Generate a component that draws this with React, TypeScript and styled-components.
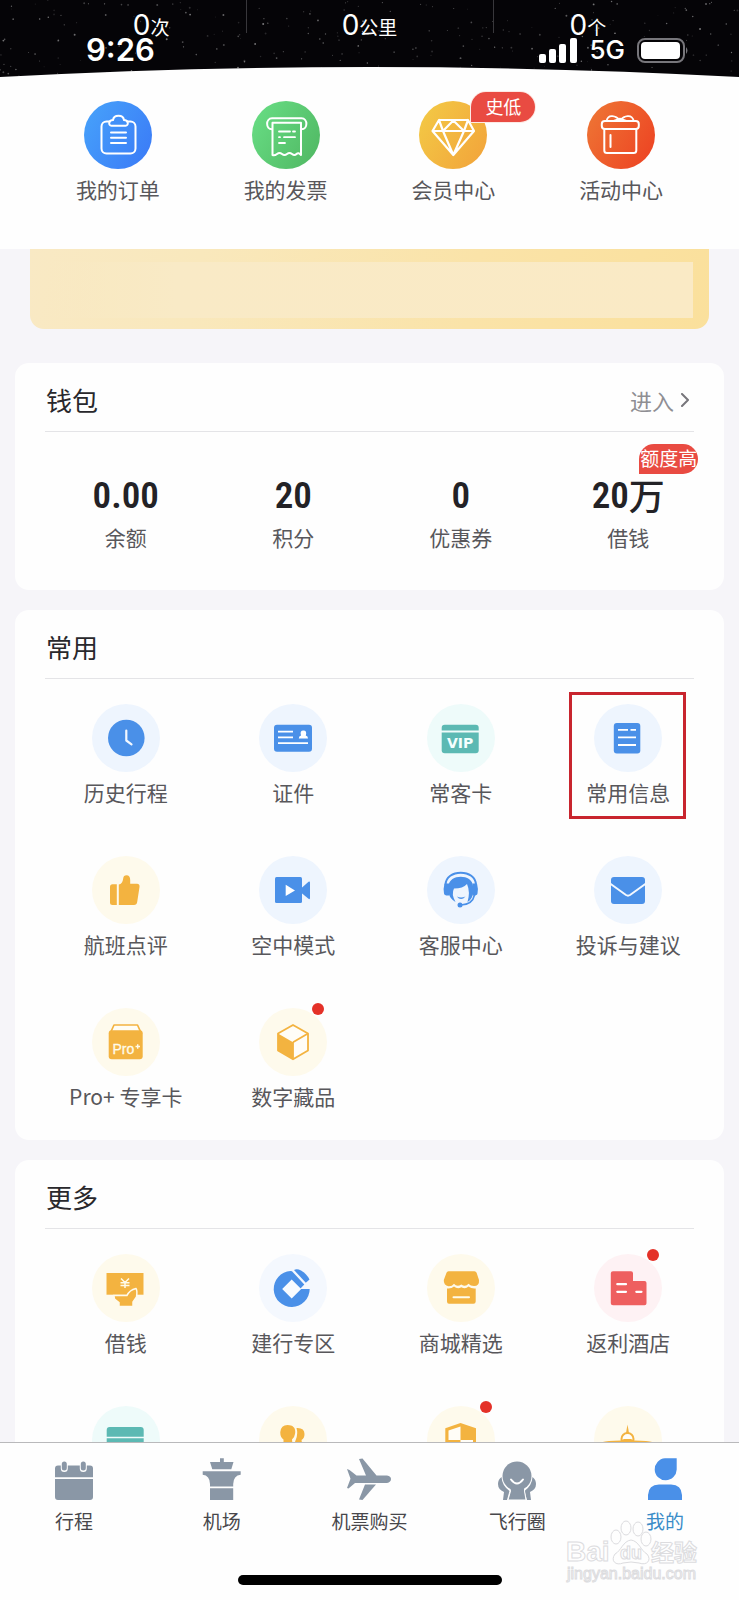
import React from "react";
import styled, { createGlobalStyle, css } from "styled-components";

const GlobalStyle = createGlobalStyle`
  *, *::before, *::after { box-sizing: border-box; }
  body {
    margin: 0;
    background: #f6f5f9;
    color: #58575b;
    font-family: "Noto Sans CJK SC", sans-serif;
  }
  h1, h2, p { margin: 0; }
  a { color: inherit; text-decoration: none; }
  button { border: 0; padding: 0; background: none; font: inherit; color: inherit; cursor: pointer; }
  svg { display: block; }
`;

const BLUE = "#4a90e8";
const TEAL = "#5cb9b3";
const YELLOW = "#f3b340";
const RED = "#ee5f5f";
const GREY = "#8a97a6";

const Screen = styled.div`
  display: flex;
  flex-direction: column;
  height: 100vh;
  overflow: hidden;
`;

/* ---------- top ---------- */

const Sky = styled.header`
  position: relative;
  height: 77px;
  background: #050407;
  color: #fff;
  overflow: hidden;
`;

const SkyLayer = styled.svg`
  position: absolute;
  inset: 0;
  width: 100%;
  height: 100%;
`;

const Horizon = styled.svg`
  position: absolute;
  left: 0;
  bottom: 0;
  width: 100%;
  height: 11px;
`;

const TripStats = styled.div`
  position: relative;
  display: grid;
  grid-template-columns: repeat(3, 1fr);
  padding: 10px 42px 0;
`;

const TripStat = styled.p`
  text-align: center;
  font: 400 19px/30px "Noto Sans CJK SC", sans-serif;
  white-space: nowrap;

  b {
    font: 400 28px/30px Inter, sans-serif;
  }
`;

const Divider = styled.i<{ $at: string }>`
  position: absolute;
  top: 0;
  left: ${(p) => p.$at};
  width: 1px;
  height: 33px;
  background: #38373b;
`;

const StatusBar = styled.div`
  position: absolute;
  top: 34px;
  left: 86px;
  right: 50px;
  display: flex;
  align-items: center;
  justify-content: space-between;
  font: 600 31px/32px Inter, sans-serif;
`;

const StatusRight = styled.div`
  display: flex;
  align-items: center;
  gap: 12px;
  font-size: 26px;
  font-weight: 500;
`;

const QuickRow = styled.nav`
  display: grid;
  grid-template-columns: repeat(4, 1fr);
  padding: 24px 34px 45px;
  background: #fefefe;
`;

/* ---------- shared tile ---------- */

const Tile = styled.a`
  position: relative;
  display: flex;
  flex-direction: column;
  align-items: center;
  gap: 5px;
`;

const TileLabel = styled.span`
  font-size: 21px;
  line-height: 30px;
  white-space: nowrap;
`;

const Disc = styled.svg`
  width: 68px;
  height: 68px;
`;

const Dot = styled.i`
  position: absolute;
  top: -5px;
  left: calc(50% + 19px);
  width: 12px;
  height: 12px;
  border-radius: 50%;
  background: #e43128;
`;

const Highlight = styled.i`
  position: absolute;
  inset: -12px auto -12px calc(50% - 59px);
  width: 117px;
  border: 3px solid #c8252e;
`;

const Tag = styled.em<{ $wide?: boolean }>`
  position: absolute;
  top: ${(p) => (p.$wide ? "-30px" : "-9px")};
  left: calc(50% + ${(p) => (p.$wide ? 11 : 18)}px);
  width: ${(p) => (p.$wide ? 59 : 64)}px;
  padding-bottom: 2px;
  border-radius: 16px 16px 16px 0;
  background: #e94b42;
  color: #fff;
  font-style: normal;
  font-size: ${(p) => (p.$wide ? 19 : 18)}px;
  line-height: 28px;
  text-align: center;
  white-space: nowrap;
  ${(p) => !p.$wide && css`box-shadow: 0 0 0 1px #fde9e4;`}
`;

/* ---------- body ---------- */

const Feed = styled.main`
  flex: 1;
  min-height: 0;
  overflow-y: auto;
  scrollbar-width: none;
  padding: 0 15px;
  display: flex;
  flex-direction: column;
  gap: 20px;
`;

const Banner = styled.div`
  flex: none;
  margin: 0 15px 14px;
  padding: 13px 16px 11px;
  border-radius: 0 0 14px 14px;
  background: linear-gradient(100deg, #f9e9c4 0%, #f9e8bc 25%, #fae3a8 65%, #fae09c 100%);
`;

const BannerInner = styled.div`
  height: 56px;
  background: linear-gradient(90deg, rgba(249, 234, 200, 0), #f9eac6 20%, #faeac5);
`;

const Card = styled.section`
  flex: none;
  border-radius: 14px;
  background: #fefefe;
`;

const CardHead = styled.div`
  display: flex;
  align-items: center;
  justify-content: space-between;
  height: 69px;
  margin: 0 30px;
  padding: 6px 4px 0 1px;
  border-bottom: 1px solid #e4e4e7;
`;

const CardTitle = styled.h2`
  font-size: 26px;
  line-height: 36px;
  font-weight: 400;
  color: #29282c;
`;

const EnterLink = styled.a`
  display: flex;
  align-items: center;
  gap: 6px;
  color: #8f8e93;
  font-size: 22px;
  line-height: 32px;
`;

const CardGrid = styled.div<{ $wallet?: boolean }>`
  display: grid;
  grid-template-columns: repeat(4, 1fr);
  row-gap: 49px;
  padding: ${(p) => (p.$wallet ? "42px 12px 38px 27px" : "25px 12px 29px 27px")};
`;

const Amount = styled.strong`
  display: flex;
  align-items: center;
  height: 43px;
  font: 600 37px/42px "Roboto Condensed", Roboto, sans-serif;
  color: #232226;
  white-space: nowrap;

  small {
    padding-bottom: 4px;
    font: 500 36px/38px "Noto Sans CJK SC", sans-serif;
  }
`;

/* ---------- bottom ---------- */

const TabBar = styled.footer`
  position: relative;
  height: 158px;
  padding-top: 14px;
  border-top: 1px solid #b9b9bb;
  background: #fefefe;
`;

const Tabs = styled.nav`
  display: grid;
  grid-template-columns: repeat(5, 1fr);
`;

const Tab = styled.button<{ $active?: boolean }>`
  display: flex;
  flex-direction: column;
  align-items: center;
  gap: 6px;
  font-size: 19px;
  line-height: 28px;
  color: ${(p) => (p.$active ? "#3a8cc8" : "#48474b")};
`;

const HomeIndicator = styled.i`
  position: absolute;
  bottom: 15px;
  left: 50%;
  width: 264px;
  height: 10px;
  margin-left: -132px;
  border-radius: 5px;
  background: #000;
`;

const Watermark = styled.svg`
  position: absolute;
  right: 36px;
  bottom: 8px;
  width: 140px;
  height: 72px;
`;

/* ---------- drawings ---------- */

const line = { fill: "none", strokeLinecap: "round", strokeLinejoin: "round" } as const;

function Stars() {
  let seed = 41;
  const next = () => {
    seed = (seed * 1103515245 + 12345) % 2147483648;
    return seed / 2147483648;
  };
  const stars = Array.from({ length: 260 }, () => ({
    x: next() * 739,
    y: next() * 77,
    r: 0.4 + next() * 0.6,
    o: 0.12 + next() * 0.35,
  }));
  return (
    <SkyLayer viewBox="0 0 739 77" preserveAspectRatio="xMidYMid slice" aria-hidden>
      {stars.map((s, i) => (
        <circle key={i} cx={s.x} cy={s.y} r={s.r} fill="#fff" opacity={s.o} />
      ))}
    </SkyLayer>
  );
}

const Signal = () => (
  <svg width="38" height="25" viewBox="0 0 38 25" fill="#fff" aria-hidden>
    <rect x="0" y="16" width="7" height="9" rx="2" />
    <rect x="10" y="11" width="7" height="14" rx="2" />
    <rect x="20" y="6" width="7" height="19" rx="2" />
    <rect x="31" y="0" width="7" height="25" rx="2" />
  </svg>
);

const Battery = () => (
  <svg width="52" height="25" viewBox="0 0 52 25" aria-hidden>
    <rect x="1" y="1" width="46" height="23" rx="7" fill="none" stroke="#77767b" strokeWidth="2" />
    <rect x="4" y="4" width="39" height="17" rx="4" fill="#fff" />
    <path d="M49 9q3 3.500 0 7z" fill="#77767b" />
  </svg>
);

const Gradient = ({ id, from, to }: { id: string; from: string; to: string }) => (
  <>
    <defs>
      <linearGradient id={id} x1="0" y1="0.200" x2="1" y2="0.800">
        <stop offset="0" stopColor={from} />
        <stop offset="1" stopColor={to} />
      </linearGradient>
    </defs>
    <circle cx="34" cy="34" r="34" fill={`url(#${id})`} />
  </>
);

const quickIcons: Record<string, React.ReactNode> = {
  order: (
    <>
      <Gradient id="g-order" from="#46a0fa" to="#3b7cf7" />
      <g {...line} stroke="#fff" strokeWidth="2">
        <rect x="17.500" y="20.500" width="34" height="32" rx="5" />
        <path d="M27.500 24.800C24 24.500 24.500 19 29 19C29.500 16 32 14.800 34.500 14.800S39.500 16 40 19C44.500 19 45 24.500 41.500 24.800Z" fill="#4290f8" />
        <path d="M27 31.500H42M27 36.800H42M27 42H42" />
      </g>
    </>
  ),
  invoice: (
    <>
      <Gradient id="g-invoice" from="#67dc83" to="#51b964" />
      <g {...line} stroke="#fff" strokeWidth="2">
        <path d="M20 28.300C13.500 28.300 13.500 17.300 20 17.300H49.500C56 17.300 56 28.300 49.500 28.300" />
        <path d="M20.500 54V21.800H49V54Q46.500 51 44.500 53T40 53T35 53T30 53T25 53T20.500 54Z" />
        <path d="M27 30.500H38M41 30.500H43M27 36.200H28M32 36.200H43M27 42H33" strokeWidth="1.800" />
      </g>
    </>
  ),
  vip: (
    <>
      <Gradient id="g-vip" from="#f3c845" to="#f2a53b" />
      <path
        {...line}
        stroke="#fff"
        strokeWidth="2.200"
        d="M20 19H49L55 30L34.300 54L13.500 30ZM13.500 30H55M20 19L24 30L34.300 19.500L45 30L49 19M24 30L34.300 54L45 30"
      />
    </>
  ),
  gift: (
    <>
      <Gradient id="g-gift" from="#ee7434" to="#ed4423" />
      <g {...line} stroke="#fff" strokeWidth="2">
        <rect x="14.800" y="20" width="37" height="8" rx="3" />
        <path d="M17.300 28V49.500Q17.300 52 20 52H46.500Q49.300 52 49.300 49.500V28M23.500 34V46" />
        <path d="M19.500 20C21 12.500 29 14.500 33 19.500C37 14.500 45 12.500 46.800 20M26 20L33 17.500L40 20" strokeWidth="1.700" />
      </g>
    </>
  ),
};

const pale = { blue: "#eef5fe", ice: "#f4f8fe", teal: "#eefbfa", yellow: "#fefaec", red: "#fef2f4" };

const icons: Record<string, [keyof typeof pale, React.ReactNode]> = {
  clock: ["blue", (
    <>
      <circle cx="34.300" cy="34" r="18.300" fill={BLUE} />
      <path {...line} stroke="#f3f8ff" strokeWidth="2.200" d="M34.300 26.500V36.500L39.500 40.300" />
    </>
  )],
  id: ["blue", (
    <>
      <rect x="15" y="20.700" width="38" height="27" rx="3" fill={BLUE} />
      <path stroke="#fff" strokeWidth="1.800" d="M19 27.700H34M19 33.300H34M19 39.200H49" />
      <path d="M39.800 34.500Q39.800 32 42 31.500Q40.500 26.500 44.400 26.500T46.800 31.500Q49 32 49 34.500Z" fill="#fff" />
    </>
  )],
  vipcard: ["teal", (
    <>
      <rect x="14.700" y="20.700" width="37" height="28.600" rx="3" fill={TEAL} />
      <path stroke="#effbfa" strokeWidth="2" d="M14 27.500H52" />
      <text x="33.200" y="43.500" textAnchor="middle" fill="#f4fffe" fontFamily="DejaVu Sans" fontWeight="700" fontSize="14">VIP</text>
    </>
  )],
  doc: ["blue", (
    <>
      <rect x="19.800" y="19" width="26.500" height="30.500" rx="3" fill={BLUE} />
      <path stroke="#fff" strokeWidth="1.800" d="M24 25.800H34M36.500 25.800H42M24 33.400H42M24 41H42" />
    </>
  )],
  thumb: ["yellow", (
    <g fill={YELLOW}>
      <path d="M24.800 28.300V49H20.500Q18 49 18 46.500V31Q18 28.300 20.500 28.300Z" />
      <path d="M26.800 49V28.500Q30.500 28 31.200 22.500Q31.500 19.300 34.500 19.300Q38.200 19.500 38.200 24V27.800H45Q48 28 47.500 31L45.200 46Q44.800 49 42 49Z" />
    </g>
  )],
  video: ["blue", (
    <>
      <rect x="16" y="21" width="27" height="26" rx="1.500" fill={BLUE} />
      <path d="M42.500 32L49.500 25.700Q51 25 51 26.500V42Q51 43.800 49.500 42.800L42.500 37Z" fill={BLUE} />
      <path d="M26.700 28.800V40L36 34.400Z" fill="#fff" />
    </>
  )],
  headset: ["blue", (
    <>
      <path {...line} stroke={BLUE} strokeWidth="2" d="M18.500 29C18.500 12.500 49 12.500 49 29" />
      <path d="M17.500 27.500H22V39.500Q17.500 40 17 37.500Q16 33 17.500 27.500ZM50 27.500H45.500V39.500Q50 40 50.500 37.500Q51.500 33 50 27.500Z" fill={BLUE} />
      <path d="M21.500 30C22 17.500 45.500 17.500 46 30V38Q44.500 44 40.500 46Q43.500 36 40 28Q36 32.500 27 32.500Q24 38 28.500 46Q23 43 21.500 37Z" fill={BLUE} />
      <path {...line} stroke={BLUE} strokeWidth="1.600" d="M47.500 39Q45.500 48.500 34 49" />
      <path d="M29.800 40.500Q34 42.500 38.500 40.500Q34 45.500 29.800 40.500Z" fill={BLUE} />
      <circle cx="33" cy="49" r="2.500" fill={BLUE} />
    </>
  )],
  mail: ["blue", (
    <>
      <rect x="17" y="21" width="34" height="27" rx="3" fill={BLUE} />
      <path fill="none" stroke="#f3f8ff" strokeWidth="2" d="M16 27.500L32 39Q34 40.300 36 39L52 27.500" />
    </>
  )],
  pro: ["yellow", (
    <>
      <path d="M18.800 24L22 17H45.500L48.700 24Z" fill="#fffdf5" stroke={YELLOW} strokeWidth="1.700" strokeLinejoin="round" />
      <rect x="16.700" y="22.300" width="34" height="29" rx="3" fill={YELLOW} />
      <text x="20.500" y="46" fill="#fffbe9" stroke="#fffbe9" strokeWidth="0.300" fontFamily="Liberation Sans" fontSize="14">Pro</text>
      <path stroke="#fffbe9" strokeWidth="1.400" d="M43.500 38.500H48M45.700 36.200V40.800" />
    </>
  )],
  cube: ["yellow", (
    <>
      <path d="M34 17L49 25.500V42.500L34 51.300L19 42.500V25.500Z" fill="#fffdf7" stroke={YELLOW} strokeWidth="1.800" strokeLinejoin="round" />
      <path d="M19 25.500L34 34.300V51.300L19 42.500Z" fill={YELLOW} />
      <path d="M34 34.300L49 25.500M34 34.300V51" stroke={YELLOW} strokeWidth="1.800" />
    </>
  )],
  money: ["yellow", (
    <>
      <rect x="14.500" y="19" width="37" height="21.700" fill={YELLOW} />
      <path d="M29 24.500L33 28.500L37 24.500M28.500 28.800H37.500M28.500 31.500H37.500M33 28.500V34" fill="none" stroke="#fffbe9" strokeWidth="1.500" />
      <path d="M21.800 41.500H35Q37.500 36 44 34.500Q45.500 36.500 44.500 43L41 48V52.500H27V48.500L22.500 45Z" fill={YELLOW} stroke="#fefaec" strokeWidth="1.500" />
    </>
  )],
  bank: ["ice", (
    <>
      <path d="M31.500 17A18 18 0 1 0 50.700 35H41L45.300 30.500L33 17.300Z" fill={BLUE} />
      <path d="M35 16Q38 14.500 42 16.500Q47.500 19.500 50.500 25.500L46.800 28.800Z" fill={BLUE} />
      <path d="M32.700 25.500L42.200 35L32.700 44.500L23.200 35Z" fill="#f8fbff" />
    </>
  )],
  shop: ["yellow", (
    <>
      <path d="M21.500 17.300H47.500Q49 17.300 49.600 18.800L52 26Q52.500 32 47 32Q43.500 32 41.500 29.800Q38.500 33.500 34.300 30.500Q30 33.500 27 29.800Q25 32.500 21.500 32.300Q16.500 31.500 16.800 26L19.500 18.800Q20 17.300 21.500 17.300Z" fill={YELLOW} />
      <path d="M20 34.500Q24.500 35 27 32.500Q30.500 35.500 34.300 33.200Q38.500 35.500 41.500 32.500Q44.500 35 48.700 34.500V47.500Q48.700 49.700 46.500 49.700H22Q20 49.700 20 47.500Z" fill={YELLOW} />
      <path {...line} stroke="#fffbe9" strokeWidth="2" d="M26.500 43.300H42" />
    </>
  )],
  hotel: ["red", (
    <>
      <path d="M19 17.300H37Q39 17.300 39 19.300V27H50.500Q52.500 27 52.500 29V49.300Q52.500 51.300 50.500 51.300H19Q16.800 51.300 16.800 49.300V19.300Q16.800 17.300 19 17.300Z" fill={RED} />
      <path {...line} stroke="#fff" strokeWidth="2.200" d="M23.300 30.200H32M23.300 37.800H32M42.300 37.800H47.500" />
    </>
  )],
  card: ["teal", (
    <>
      <rect x="14.700" y="21" width="37" height="28" rx="3" fill={TEAL} />
      <path stroke="#effbfa" strokeWidth="1.500" d="M14 31.500H52" />
    </>
  )],
  people: ["yellow", (
    <>
      <path d="M28.500 19C35 19 37 23 36 28Q35.500 31.500 33 33.500L33.500 38L40 41V46H16V41L24.500 38V33.500Q21 31 21.300 26Q22 19 28.500 19Z" fill={YELLOW} />
      <path d="M37.500 22Q45.500 21.500 45.500 28Q45.500 32.500 42.500 34L43 37L49 40V46H42V39L36 36Q39.500 29 37.500 22Z" fill={YELLOW} />
    </>
  )],
  shield: ["yellow", (
    <>
      <path d="M33.500 17L49 22.300V42L33.500 51L18.300 42V22.300Z" fill={YELLOW} />
      <path d="M33.500 20.500V34H21.500V24.500ZM33.500 34H46V41L33.500 48Z" fill="#fffdf7" />
    </>
  )],
  jet: ["yellow", (
    <>
      <path d="M33.500 18.500L35 27H32Z" fill={YELLOW} />
      <circle cx="33.500" cy="33" r="6" fill="#fffdf7" stroke={YELLOW} strokeWidth="2" />
      <path d="M30 33H37L40 34.500Q58 35 59 36.500V38H8V36.500Q9 35 27 34.500Z" fill={YELLOW} />
    </>
  )],
};

const tabIcons: Record<string, React.ReactNode> = {
  calendar: (
    <>
      <path d="M8 8.500H40Q43 8.500 43 11.500V20.300H5V11.500Q5 8.500 8 8.500ZM5 22H43V40Q43 43 40 43H8Q5 43 5 40Z" />
      <path d="M14.300 6V11.500M33.300 6V11.500" stroke="#fefefe" strokeWidth="7" strokeLinecap="round" />
      <path d="M14.300 7V11M33.300 7V11" stroke={GREY} strokeWidth="5" strokeLinecap="round" />
    </>
  ),
  tower: (
    <path d="M22 1.300H25.800V5H35.500L33.300 12.300H14.300L12 5H22ZM4.700 14.300H42.700V17.800Q35.500 18.500 35.200 27V29.500H12V27Q11.800 18.500 4.700 17.800ZM12 31.200H35.200V43H12Z" />
  ),
  plane: (
    <>
      <path d="M2 12L4.500 13L11.500 18.500H21L14 2L17.500 1.500L31.500 18.500H42Q46 19 46 22T42 26H10L3.500 31.500L2 31L5.500 21.800Z" />
      <path d="M20 27.500H31L17.500 43L14 42.500Z" />
    </>
  ),
  circle: (
    <>
      <path d="M8.500 20Q9 28.500 16.500 34L14 43H10L11 35Q5 32.500 5 27Q5 22.500 8.500 20ZM39.500 20Q39 28.500 31.500 34L34 43H38L37 35Q43 32.500 43 27Q43 22.500 39.500 20Z" />
      <path d="M16.500 30H31.500V34L33 43H15L17.500 34Z" stroke="#fefefe" strokeWidth="1" />
      <circle cx="24" cy="19" r="14.500" />
      <path d="M18 22.500Q24 30.500 30 22.500" fill="none" stroke="#fff" strokeWidth="2" strokeLinecap="round" />
    </>
  ),
  me: (
    <path d="M24 1.300H35.700V12.500A11 11 0 1 1 24 1.300ZM7 43V38Q7.500 27.700 18 27.500H30Q40.500 27.700 41 38V43Z" />
  ),
};

/* ---------- data ---------- */

type Item = { label: string; icon: string; dot?: boolean; boxed?: boolean };

const quick = [
  { label: "我的订单", icon: "order" },
  { label: "我的发票", icon: "invoice" },
  { label: "会员中心", icon: "vip", tag: "史低" },
  { label: "活动中心", icon: "gift" },
];

const wallet = [
  { value: "0.00", label: "余额" },
  { value: "20", label: "积分" },
  { value: "0", label: "优惠券" },
  { value: "20", unit: "万", label: "借钱", tag: "额度高" },
];

const common: Item[] = [
  { label: "历史行程", icon: "clock" },
  { label: "证件", icon: "id" },
  { label: "常客卡", icon: "vipcard" },
  { label: "常用信息", icon: "doc", boxed: true },
  { label: "航班点评", icon: "thumb" },
  { label: "空中模式", icon: "video" },
  { label: "客服中心", icon: "headset" },
  { label: "投诉与建议", icon: "mail" },
  { label: "Pro+ 专享卡", icon: "pro" },
  { label: "数字藏品", icon: "cube", dot: true },
];

const more: Item[] = [
  { label: "借钱", icon: "money" },
  { label: "建行专区", icon: "bank" },
  { label: "商城精选", icon: "shop" },
  { label: "返利酒店", icon: "hotel", dot: true },
  { label: "", icon: "card" },
  { label: "", icon: "people" },
  { label: "", icon: "shield", dot: true },
  { label: "", icon: "jet" },
];

const tabs = [
  { label: "行程", icon: "calendar" },
  { label: "机场", icon: "tower" },
  { label: "机票购买", icon: "plane" },
  { label: "飞行圈", icon: "circle" },
  { label: "我的", icon: "me", active: true },
];

function TileGrid({ items }: { items: Item[] }) {
  return (
    <CardGrid>
      {items.map((item) => {
        const [tone, art] = icons[item.icon];
        return (
          <Tile key={item.icon} href="#">
            <Disc viewBox="0 0 68 68" aria-hidden>
              <circle cx="34" cy="34" r="34" fill={pale[tone]} />
              {art}
            </Disc>
            <TileLabel>{item.label}</TileLabel>
            {item.dot && <Dot />}
            {item.boxed && <Highlight />}
          </Tile>
        );
      })}
    </CardGrid>
  );
}

export default function App() {
  return (
    <Screen>
      <GlobalStyle />
      <Sky>
        <Stars />
        <Divider $at="33.3%" />
        <Divider $at="66.7%" />
        <TripStats>
          <TripStat><b>0</b>次</TripStat>
          <TripStat><b>0</b>公里</TripStat>
          <TripStat><b>0</b>个</TripStat>
        </TripStats>
        <StatusBar>
          <span>9:26</span>
          <StatusRight>
            <Signal />
            <span>5G</span>
            <Battery />
          </StatusRight>
        </StatusBar>
        <Horizon viewBox="0 0 739 11" preserveAspectRatio="none" aria-hidden>
          <path d="M0 11Q370 -9 739 11Z" fill="#fefefe" />
        </Horizon>
      </Sky>

      <QuickRow>
        {quick.map((item) => (
          <Tile key={item.icon} href="#">
            <Disc viewBox="0 0 68 68" aria-hidden>{quickIcons[item.icon]}</Disc>
            <TileLabel>{item.label}</TileLabel>
            {item.tag && <Tag>{item.tag}</Tag>}
          </Tile>
        ))}
      </QuickRow>

      <Feed>
        <Banner>
          <BannerInner />
        </Banner>

        <Card>
          <CardHead>
            <CardTitle>钱包</CardTitle>
            <EnterLink href="#">
              进入
              <svg width="10" height="14" viewBox="0 0 10 14" aria-hidden>
                <path {...line} stroke="#77767b" strokeWidth="2" d="M2 1L8 7L2 13" />
              </svg>
            </EnterLink>
          </CardHead>
          <CardGrid $wallet>
            {wallet.map((item) => (
              <Tile key={item.label} href="#">
                <Amount>
                  {item.value}
                  {item.unit && <small>{item.unit}</small>}
                </Amount>
                <TileLabel>{item.label}</TileLabel>
                {item.tag && <Tag $wide>{item.tag}</Tag>}
              </Tile>
            ))}
          </CardGrid>
        </Card>

        <Card>
          <CardHead>
            <CardTitle>常用</CardTitle>
          </CardHead>
          <TileGrid items={common} />
        </Card>

        <Card>
          <CardHead>
            <CardTitle>更多</CardTitle>
          </CardHead>
          <TileGrid items={more} />
        </Card>
      </Feed>

      <TabBar>
        <Tabs>
          {tabs.map((tab) => (
            <Tab key={tab.icon} type="button" $active={tab.active}>
              <svg width="48" height="44" viewBox="0 0 48 44" fill={tab.active ? BLUE : GREY} aria-hidden>
                {tabIcons[tab.icon]}
              </svg>
              {tab.label}
            </Tab>
          ))}
        </Tabs>
        <HomeIndicator />
        <Watermark viewBox="0 0 140 72" fill="#fefefe" stroke="#dcdcdf" strokeWidth="1">
          <text x="3" y="41" fontFamily="Liberation Sans" fontWeight="700" fontSize="28">Bai</text>
          <path d="M68 20C60 21 58 31 52 34C47 41 53 46 60 43Q68 41 76 43C84 46 89 40 84 34C78 31 76 21 68 20Z" />
          <ellipse cx="53" cy="17" rx="5" ry="7" />
          <ellipse cx="63" cy="8" rx="5" ry="7" />
          <ellipse cx="75" cy="9" rx="5" ry="7" />
          <ellipse cx="83" cy="19" rx="5" ry="7" />
          <text x="57" y="39" fontFamily="Liberation Sans" fontWeight="700" fontSize="18">du</text>
          <text x="88" y="41" fontFamily="Noto Sans CJK SC" fontWeight="700" fontSize="23">经验</text>
          <text x="4" y="59" fontFamily="Liberation Sans" fontSize="16">jingyan.baidu.com</text>
        </Watermark>
      </TabBar>
    </Screen>
  );
}
